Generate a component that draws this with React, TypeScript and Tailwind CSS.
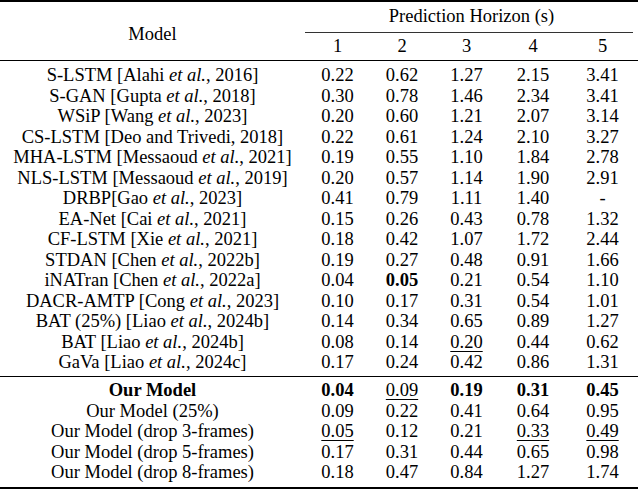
import React from "react";

type Cell = { v: string; b?: boolean; u?: boolean };
type Row = { model: React.ReactNode; cells: Cell[]; bold?: boolean };

const c = (v: string, b = false, u = false): Cell => ({ v, b, u });
const nums = (...vs: string[]) => vs.map((v) => c(v));

const EA = () => <i>et al.</i>;

const top: Row[] = [
  { model: <>S-LSTM [Alahi <EA />, 2016]</>, cells: nums("0.22", "0.62", "1.27", "2.15", "3.41") },
  { model: <>S-GAN [Gupta <EA />, 2018]</>, cells: nums("0.30", "0.78", "1.46", "2.34", "3.41") },
  { model: <>WSiP [Wang <EA />, 2023]</>, cells: nums("0.20", "0.60", "1.21", "2.07", "3.14") },
  { model: <>CS-LSTM [Deo and Trivedi, 2018]</>, cells: nums("0.22", "0.61", "1.24", "2.10", "3.27") },
  { model: <>MHA-LSTM [Messaoud <EA />, 2021]</>, cells: nums("0.19", "0.55", "1.10", "1.84", "2.78") },
  { model: <>NLS-LSTM [Messaoud <EA />, 2019]</>, cells: nums("0.20", "0.57", "1.14", "1.90", "2.91") },
  { model: <>DRBP[Gao <EA />, 2023]</>, cells: nums("0.41", "0.79", "1.11", "1.40", "-") },
  { model: <>EA-Net [Cai <EA />, 2021]</>, cells: nums("0.15", "0.26", "0.43", "0.78", "1.32") },
  { model: <>CF-LSTM [Xie <EA />, 2021]</>, cells: nums("0.18", "0.42", "1.07", "1.72", "2.44") },
  { model: <>STDAN [Chen <EA />, 2022b]</>, cells: nums("0.19", "0.27", "0.48", "0.91", "1.66") },
  { model: <>iNATran [Chen <EA />, 2022a]</>, cells: [c("0.04"), c("0.05", true), c("0.21"), c("0.54"), c("1.10")] },
  { model: <>DACR-AMTP [Cong <EA />, 2023]</>, cells: nums("0.10", "0.17", "0.31", "0.54", "1.01") },
  { model: <>BAT (25%) [Liao <EA />, 2024b]</>, cells: nums("0.14", "0.34", "0.65", "0.89", "1.27") },
  { model: <>BAT [Liao <EA />, 2024b]</>, cells: [c("0.08"), c("0.14"), c("0.20", false, true), c("0.44"), c("0.62")] },
  { model: <>GaVa [Liao <EA />, 2024c]</>, cells: nums("0.17", "0.24", "0.42", "0.86", "1.31") },
];

const bottom: Row[] = [
  {
    model: <b>Our Model</b>,
    cells: [c("0.04", true), c("0.09", false, true), c("0.19", true), c("0.31", true), c("0.45", true)],
  },
  { model: <>Our Model (25%)</>, cells: nums("0.09", "0.22", "0.41", "0.64", "0.95") },
  {
    model: <>Our Model (drop 3-frames)</>,
    cells: [c("0.05", false, true), c("0.12"), c("0.21"), c("0.33", false, true), c("0.49", false, true)],
  },
  { model: <>Our Model (drop 5-frames)</>, cells: nums("0.17", "0.31", "0.44", "0.65", "0.98") },
  { model: <>Our Model (drop 8-frames)</>, cells: nums("0.18", "0.47", "0.84", "1.27", "1.74") },
];

const colW = ["w-[65px]", "w-[64px]", "w-[65px]", "w-[68px]", "w-[71px]"];

function DataRow({ row }: { row: Row }) {
  return (
    <div className="flex h-[20.5px] leading-[20.5px]">
      <div className="w-[305px] text-center whitespace-nowrap">{row.model}</div>
      {row.cells.map((cell, i) => (
        <div key={i} className={`${colW[i]} text-center`}>
          <span
            className={`${cell.b ? "font-bold" : ""} ${
              cell.u ? "underline decoration-1 underline-offset-[3px]" : ""
            }`}
          >
            {cell.v}
          </span>
        </div>
      ))}
    </div>
  );
}

export default function App() {
  return (
    <div className="w-[638px] h-[490px] bg-white text-black font-['Liberation_Serif',serif] text-[18.5px] leading-[20.5px] overflow-hidden">
      <div className="h-[2px] bg-black" />
      <div className="flex h-[58px]">
        <div className="w-[305px] text-center pt-[22px]">Model</div>
        <div className="flex-1 flex flex-col">
          <div className="pt-[4px] pb-[5.5px] text-center">Prediction Horizon (s)</div>
          <div className="h-[1px] bg-[#333] mr-[5px]" />
          <div className="flex pt-[3px]">
            {["1", "2", "3", "4", "5"].map((n, i) => (
              <div key={n} className={`${colW[i]} text-center`}>
                {n}
              </div>
            ))}
          </div>
        </div>
      </div>
      <div className="h-[1px] bg-black" />
      <div className="pt-[4px] pb-[3.5px]">
        {top.map((r, i) => (
          <DataRow key={i} row={r} />
        ))}
      </div>
      <div className="h-[1px] bg-black" />
      <div className="pt-[3px] pb-[4.5px]">
        {bottom.map((r, i) => (
          <DataRow key={i} row={r} />
        ))}
      </div>
      <div className="h-[2px] bg-black" />
    </div>
  );
}
